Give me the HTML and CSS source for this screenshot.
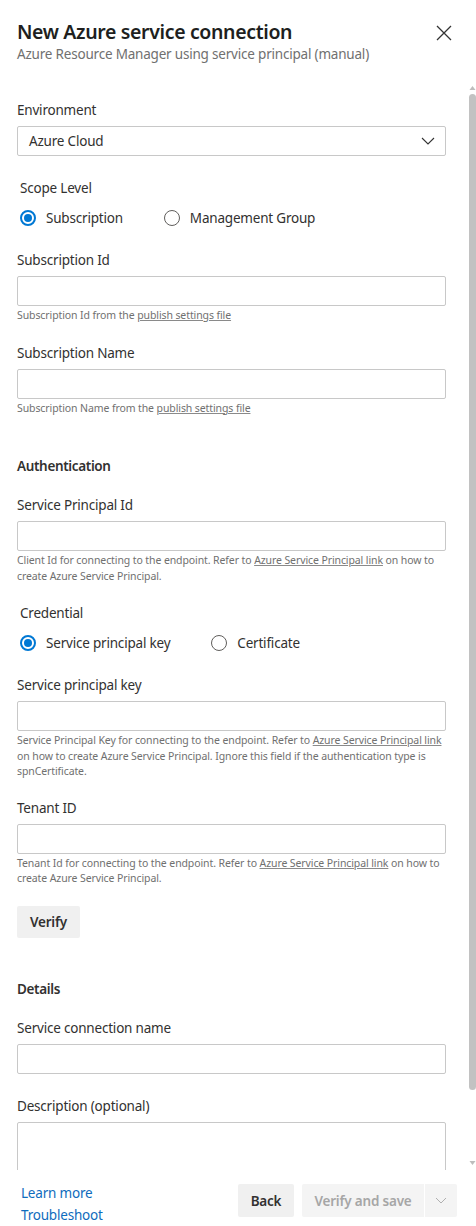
FILE: index.html
```html
<!DOCTYPE html>
<html lang="en">
<head>
<meta charset="utf-8">
<title>New Azure service connection</title>
<link rel="stylesheet" href="styles.css">
</head>
<body>
<div class="dialog">
  <header class="header">
    <div class="titles">
      <h1 class="title">New Azure service connection</h1>
      <div class="subtitle">Azure Resource Manager using service principal (manual)</div>
    </div>
    <button class="close" aria-label="Close">
      <svg width="16" height="16" viewBox="0 0 16 16"><path d="M1 1 L15 15 M15 1 L1 15" stroke="#333" stroke-width="1.3" fill="none"/></svg>
    </button>
  </header>

  <div class="body">
    <main class="content">
      <div class="field nohelp">
        <label class="label">Environment</label>
        <div class="select">
          <span>Azure Cloud</span>
          <svg width="14" height="8" viewBox="0 0 14 8"><path d="M1 1 L7 7 L13 1" stroke="#333" stroke-width="1.1" fill="none"/></svg>
        </div>
      </div>

      <div class="field radiofield">
        <label class="label indent">Scope Level</label>
        <div class="radios">
          <span class="radio checked"><span class="dot"></span>Subscription</span>
          <span class="radio"><span class="dot"></span>Management Group</span>
        </div>
      </div>

      <div class="field">
        <label class="label">Subscription Id</label>
        <div class="input"></div>
        <div class="help">Subscription Id from the <u>publish settings file</u></div>
      </div>

      <div class="field">
        <label class="label">Subscription Name</label>
        <div class="input"></div>
        <div class="help">Subscription Name from the <u>publish settings file</u></div>
      </div>

      <h2 class="section">Authentication</h2>

      <div class="field">
        <label class="label">Service Principal Id</label>
        <div class="input"></div>
        <div class="help">Client Id for connecting to the endpoint. Refer to <u>Azure Service Principal link</u> on how to create Azure Service Principal.</div>
      </div>

      <div class="field radiofield">
        <label class="label indent">Credential</label>
        <div class="radios">
          <span class="radio checked"><span class="dot"></span>Service principal key</span>
          <span class="radio"><span class="dot"></span>Certificate</span>
        </div>
      </div>

      <div class="field">
        <label class="label">Service principal key</label>
        <div class="input"></div>
        <div class="help">Service Principal Key for connecting to the endpoint. Refer to <u>Azure Service Principal link</u> on how to create Azure Service Principal. Ignore this field if the authentication type is spnCertificate.</div>
      </div>

      <div class="field tight">
        <label class="label">Tenant ID</label>
        <div class="input"></div>
        <div class="help">Tenant Id for connecting to the endpoint. Refer to <u>Azure Service Principal link</u> on how to create Azure Service Principal.</div>
      </div>

      <button class="btn verify">Verify</button>

      <h2 class="section">Details</h2>

      <div class="field nohelp">
        <label class="label">Service connection name</label>
        <div class="input"></div>
      </div>

      <div class="field">
        <label class="label">Description (optional)</label>
        <div class="input textarea"></div>
      </div>
    </main>

    <div class="scrollbar" aria-hidden="true">
      <svg class="arrow" width="7" height="6" viewBox="0 0 7 6"><path d="M0.5 5 L3.5 1 L6.5 5 Z" fill="#bdbdbd"/></svg>
      <div class="thumb"></div>
      <div class="track-rest"></div>
      <svg class="arrow" width="7" height="6" viewBox="0 0 7 6"><path d="M0.5 1 L3.5 5 L6.5 1 Z" fill="#bdbdbd"/></svg>
    </div>
  </div>

  <footer class="footer">
    <div class="links">
      <a class="link">Learn more</a>
      <a class="link">Troubleshoot</a>
    </div>
    <div class="actions">
      <button class="btn back">Back</button>
      <div class="split">
        <button class="btn save" disabled>Verify and save</button>
        <button class="btn more" disabled>
          <svg width="12" height="7" viewBox="0 0 12 7"><path d="M1 1 L6 6 L11 1" stroke="#b0b0b0" stroke-width="1" fill="none"/></svg>
        </button>
      </div>
    </div>
  </footer>
</div>
</body>
</html>
```

FILE: styles.css
```css
* { box-sizing: border-box; }

html, body {
  margin: 0;
  padding: 0;
  background: #ffffff;
}

body {
  font-family: "Noto Sans", "Open Sans", sans-serif;
  color: #323130;
  font-size: 13.5px;
}

.dialog {
  height: 1226px;
  display: flex;
  flex-direction: column;
  overflow: hidden;
}

.header {
  flex: none;
  height: 82px;
  display: flex;
  justify-content: space-between;
  align-items: flex-start;
  padding: 18px 24px 0 17px;
}

.title {
  margin: 0;
  font-size: 19.5px;
  line-height: 28px;
  font-weight: 600;
  color: #201f1e;
  letter-spacing: -0.35px;
}

.subtitle {
  margin-top: -2px;
  font-size: 13.5px;
  line-height: 20px;
  color: #707070;
  letter-spacing: -0.2px;
}

.close {
  border: 0;
  background: transparent;
  padding: 0;
  margin-top: 7px;
  width: 16px;
  height: 16px;
  display: flex;
}

.body {
  flex: none;
  height: 1088px;
  display: flex;
}

.content {
  flex: 1;
  min-width: 0;
  overflow: hidden;
  padding: 17px 23px 24px 17px;
}

.scrollbar {
  flex: none;
  width: 7px;
  display: flex;
  flex-direction: column;
  align-items: center;
  padding: 3px 0 4px;
}

.arrow {
  flex: none;
  display: block;
}

.thumb {
  flex: none;
  width: 7px;
  height: 996px;
  margin-top: 3px;
  background: #c2c2c2;
  border-radius: 4px;
}

.track-rest {
  flex: 1;
}

.field {
  margin-top: 18px;
}
.field:first-child {
  margin-top: 0;
}
.field.tight {
  margin-top: 17px;
}
.field.nohelp {
  padding-bottom: 3px;
}
.field.radiofield {
  padding-bottom: 3px;
}

.label {
  display: block;
  font-size: 13.5px;
  line-height: 20px;
  padding-top: 1px;
  color: #323130;
  margin-bottom: 6px;
  letter-spacing: -0.2px;
}
.label.indent {
  padding-left: 3px;
  margin-bottom: 10px;
}

.input, .select {
  height: 30px;
  border: 1px solid #c8c8c8;
  border-radius: 2px;
  background: #fff;
}

.select {
  display: flex;
  align-items: center;
  justify-content: space-between;
  padding: 0 10px 0 11px;
  font-size: 13.5px;
  letter-spacing: -0.2px;
}

.textarea {
  height: 64px;
}

.help {
  margin-top: 2px;
  font-size: 10.5px;
  line-height: 15.5px;
  color: #707070;
  letter-spacing: -0.1px;
}
.help u {
  text-decoration-color: #8a8a8a;
  text-underline-offset: 1px;
}

.radios {
  display: flex;
  align-items: center;
  gap: 41px;
  padding-left: 3px;
  height: 20px;
}

.radio {
  display: flex;
  align-items: center;
  gap: 10px;
  font-size: 13.5px;
  letter-spacing: -0.2px;
  color: #323130;
}

.dot {
  width: 16px;
  height: 16px;
  border-radius: 50%;
  border: 1px solid #605e5c;
  background: #fff;
  position: relative;
  flex: none;
}
.radio.checked .dot {
  border: 2px solid #0078d4;
}
.radio.checked .dot::after {
  content: "";
  position: absolute;
  left: 2px;
  top: 2px;
  width: 8px;
  height: 8px;
  border-radius: 50%;
  background: #0078d4;
}

.section {
  margin: 39px 0 0;
  padding-top: 1px;
  font-size: 13.5px;
  line-height: 20px;
  font-weight: 600;
  color: #323130;
  letter-spacing: -0.35px;
}
.section + .field {
  margin-top: 18px;
}

.btn {
  font-family: inherit;
  font-size: 13.5px;
  font-weight: 600;
  border: 0;
  border-radius: 2px;
  background: #f0f0f0;
  color: #323130;
  height: 32px;
  padding: 0 12px;
  letter-spacing: -0.2px;
}

.verify {
  display: block;
  margin-top: 19px;
  width: 63px;
  padding: 0;
}

.verify + .section {
  margin-top: 40px;
}

.footer {
  flex: none;
  height: 56px;
  display: flex;
  justify-content: space-between;
  align-items: flex-start;
  padding: 0 19px 0 21px;
}

.links {
  display: flex;
  flex-direction: column;
  padding-top: 12px;
}

.link {
  color: #0f6cbd;
  font-size: 13.5px;
  line-height: 22px;
  letter-spacing: -0.2px;
  cursor: pointer;
}

.actions {
  display: flex;
  gap: 8px;
  padding-top: 14px;
}

.back {
  width: 56px;
  padding: 0;
  height: 33px;
}

.split {
  display: flex;
  gap: 1px;
}

.save {
  width: 122px;
  height: 33px;
  padding: 0;
  background: #f4f4f4;
  color: #a6a6a6;
  border-radius: 2px 0 0 2px;
}

.more {
  width: 32px;
  height: 33px;
  padding: 0;
  background: #f4f4f4;
  border-radius: 0 2px 2px 0;
  display: flex;
  align-items: center;
  justify-content: center;
}
```
